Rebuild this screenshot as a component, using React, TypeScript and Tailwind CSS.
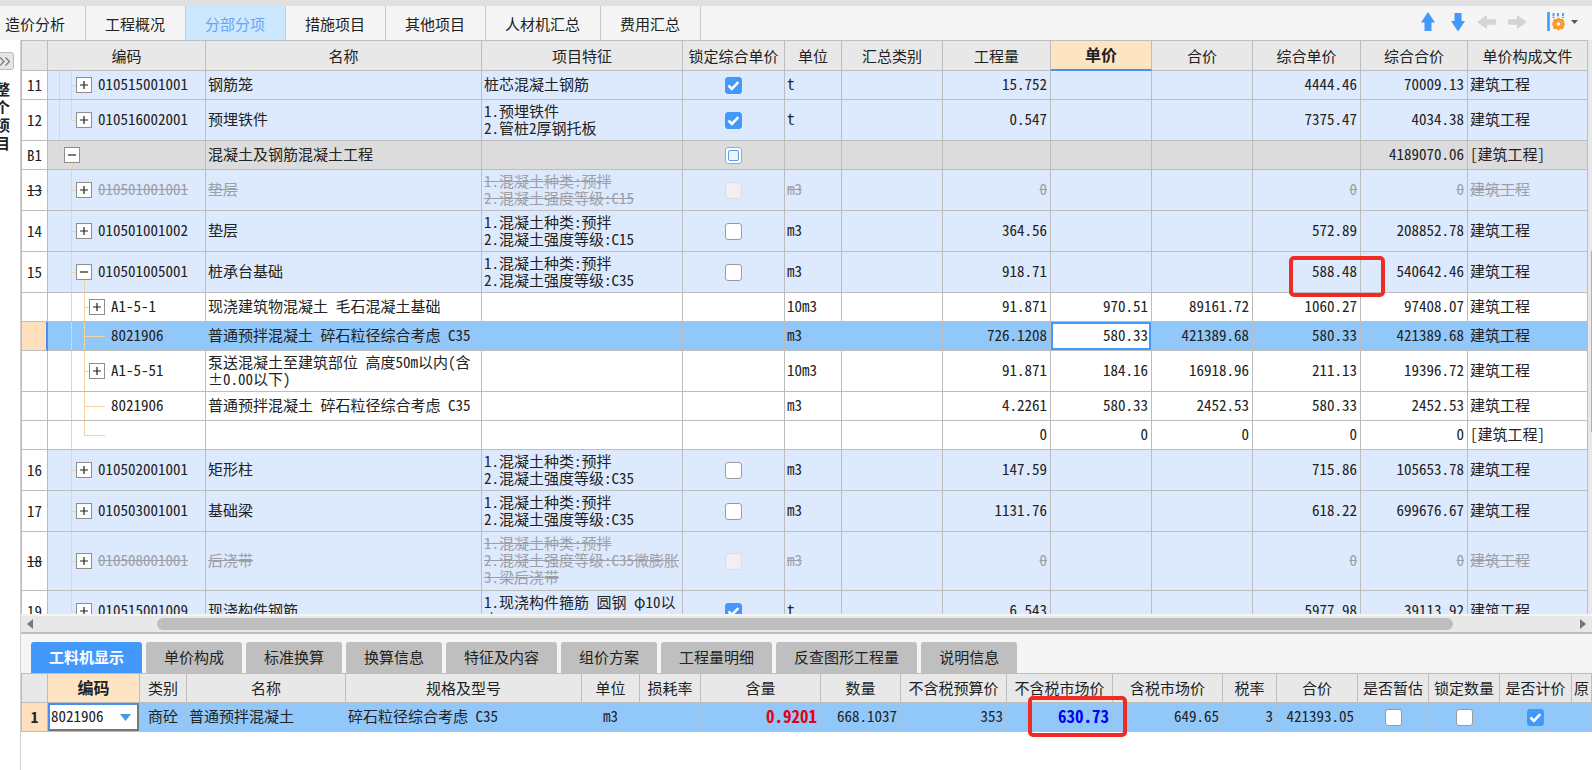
import React, { useState } from 'react';
import clsx from 'clsx';

type Guide = 'blank' | 'line' | 'tee' | 'end';
type Tone = 'item' | 'group' | 'sub' | 'selected';

interface Row {
  id: string;
  no: string;
  tone: Tone;
  lines: 1 | 2 | 3;
  guides: Guide[];
  toggle?: 'plus' | 'minus';
  code: string;
  name: string;
  feature?: string[];
  lock?: 'on' | 'off' | 'mixed' | 'disabled';
  unit: string;
  qty: string;
  price?: string;
  total?: string;
  compPrice: string;
  compTotal: string;
  file: string;
  struck?: boolean;
  marked?: boolean;
}

const mix = (grade: string) => ['1.混凝土种类:预拌', `2.混凝土强度等级:${grade}`];

const rows: Row[] = [
  { id: 'r11', no: '11', tone: 'item', lines: 1, guides: ['line', 'tee'], toggle: 'plus', code: '010515001001', name: '钢筋笼', feature: ['桩芯混凝土钢筋'], lock: 'on', unit: 't', qty: '15.752', compPrice: '4444.46', compTotal: '70009.13', file: '建筑工程' },
  { id: 'r12', no: '12', tone: 'item', lines: 2, guides: ['line', 'end'], toggle: 'plus', code: '010516002001', name: '预埋铁件', feature: ['1.预埋铁件', '2.管桩2厚钢托板'], lock: 'on', unit: 't', qty: '0.547', compPrice: '7375.47', compTotal: '4034.38', file: '建筑工程' },
  { id: 'b1', no: 'B1', tone: 'group', lines: 1, guides: ['end'], toggle: 'minus', code: '', name: '混凝土及钢筋混凝土工程', lock: 'mixed', unit: '', qty: '', compPrice: '', compTotal: '4189070.06', file: '[建筑工程]' },
  { id: 'r13', no: '13', tone: 'item', lines: 2, guides: ['blank', 'tee'], toggle: 'plus', code: '010501001001', name: '垫层', feature: mix('C15'), lock: 'disabled', unit: 'm3', qty: '0', compPrice: '0', compTotal: '0', file: '建筑工程', struck: true },
  { id: 'r14', no: '14', tone: 'item', lines: 2, guides: ['blank', 'tee'], toggle: 'plus', code: '010501001002', name: '垫层', feature: mix('C15'), lock: 'off', unit: 'm3', qty: '364.56', compPrice: '572.89', compTotal: '208852.78', file: '建筑工程' },
  { id: 'r15', no: '15', tone: 'item', lines: 2, guides: ['blank', 'tee'], toggle: 'minus', code: '010501005001', name: '桩承台基础', feature: mix('C35'), lock: 'off', unit: 'm3', qty: '918.71', compPrice: '588.48', compTotal: '540642.46', file: '建筑工程', marked: true },
  { id: 'r15a', no: '', tone: 'sub', lines: 1, guides: ['blank', 'line', 'tee'], toggle: 'plus', code: 'A1-5-1', name: '现浇建筑物混凝土 毛石混凝土基础', unit: '10m3', qty: '91.871', price: '970.51', total: '89161.72', compPrice: '1060.27', compTotal: '97408.07', file: '建筑工程' },
  { id: 'r15b', no: '', tone: 'selected', lines: 1, guides: ['blank', 'line', 'tee'], code: '8021906', name: '普通预拌混凝土 碎石粒径综合考虑 C35', unit: 'm3', qty: '726.1208', price: '580.33', total: '421389.68', compPrice: '580.33', compTotal: '421389.68', file: '建筑工程' },
  { id: 'r15c', no: '', tone: 'sub', lines: 2, guides: ['blank', 'line', 'tee'], toggle: 'plus', code: 'A1-5-51', name: '泵送混凝土至建筑部位 高度50m以内(含±0.00以下)', unit: '10m3', qty: '91.871', price: '184.16', total: '16918.96', compPrice: '211.13', compTotal: '19396.72', file: '建筑工程' },
  { id: 'r15d', no: '', tone: 'sub', lines: 1, guides: ['blank', 'line', 'tee'], code: '8021906', name: '普通预拌混凝土 碎石粒径综合考虑 C35', unit: 'm3', qty: '4.2261', price: '580.33', total: '2452.53', compPrice: '580.33', compTotal: '2452.53', file: '建筑工程' },
  { id: 'r15e', no: '', tone: 'sub', lines: 1, guides: ['blank', 'line', 'end'], code: '', name: '', unit: '', qty: '0', price: '0', total: '0', compPrice: '0', compTotal: '0', file: '[建筑工程]' },
  { id: 'r16', no: '16', tone: 'item', lines: 2, guides: ['blank', 'tee'], toggle: 'plus', code: '010502001001', name: '矩形柱', feature: mix('C35'), lock: 'off', unit: 'm3', qty: '147.59', compPrice: '715.86', compTotal: '105653.78', file: '建筑工程' },
  { id: 'r17', no: '17', tone: 'item', lines: 2, guides: ['blank', 'tee'], toggle: 'plus', code: '010503001001', name: '基础梁', feature: mix('C35'), lock: 'off', unit: 'm3', qty: '1131.76', compPrice: '618.22', compTotal: '699676.67', file: '建筑工程' },
  { id: 'r18', no: '18', tone: 'item', lines: 3, guides: ['blank', 'tee'], toggle: 'plus', code: '010508001001', name: '后浇带', feature: [...mix('C35微膨胀'), '3.梁后浇带'], lock: 'disabled', unit: 'm3', qty: '0', compPrice: '0', compTotal: '0', file: '建筑工程', struck: true },
  { id: 'r19', no: '19', tone: 'item', lines: 2, guides: ['blank', 'end'], toggle: 'plus', code: '010515001009', name: '现浇构件钢筋', feature: ['1.现浇构件箍筋 圆钢 φ10以', '内'], lock: 'on', unit: 't', qty: '6.543', compPrice: '5977.98', compTotal: '39113.92', file: '建筑工程' },
];

const columns = [
  { label: '编码', width: 'w-[158px]' },
  { label: '名称', width: '' },
  { label: '项目特征', width: 'w-[201px]' },
  { label: '锁定综合单价', width: 'w-[102px]' },
  { label: '单位', width: 'w-[57px]' },
  { label: '汇总类别', width: 'w-[101px]' },
  { label: '工程量', width: 'w-[108px]' },
  { label: '单价', width: 'w-[101px]', active: true },
  { label: '合价', width: 'w-[101px]' },
  { label: '综合单价', width: 'w-[108px]' },
  { label: '综合合价', width: 'w-[107px]' },
  { label: '单价构成文件', width: 'w-[120px]' },
];

const detailColumns = [
  { label: '编码', width: 'w-[92px]', active: true },
  { label: '类别', width: 'w-[47px]' },
  { label: '名称', width: 'w-[159px]' },
  { label: '规格及型号', width: '' },
  { label: '单位', width: 'w-[58px]' },
  { label: '损耗率', width: 'w-[61px]' },
  { label: '含量', width: 'w-[120px]' },
  { label: '数量', width: 'w-[80px]' },
  { label: '不含税预算价', width: 'w-[106px]' },
  { label: '不含税市场价', width: 'w-[106px]' },
  { label: '含税市场价', width: 'w-[110px]' },
  { label: '税率', width: 'w-[54px]' },
  { label: '合价', width: 'w-[81px]' },
  { label: '是否暂估', width: 'w-[71px]' },
  { label: '锁定数量', width: 'w-[71px]' },
  { label: '是否计价', width: 'w-[72px]' },
  { label: '原', width: 'w-[20px]' },
];

const mainTabs = ['造价分析', '工程概况', '分部分项', '措施项目', '其他项目', '人材机汇总', '费用汇总'];
const detailTabs = ['工料机显示', '单价构成', '标准换算', '换算信息', '特征及内容', '组价方案', '工程量明细', '反查图形工程量', '说明信息'];

const toneClass: Record<Tone, string> = {
  item: 'bg-[#dde9fd]',
  group: 'bg-[#dcdcdc]',
  sub: 'bg-white',
  selected: 'bg-[#91c8f9]',
};

const heightClass = { 1: 'h-[29px]', 2: 'h-[41px]', 3: 'h-[59px]' };
const innerHeightClass = { 1: 'h-[28px]', 2: 'h-[40px]', 3: 'h-[58px]' };

const cell = 'border-r border-b border-[#bdbdbd] leading-[17px]';

const TreeGuide = ({ kind, width }: { kind: Guide; width: string }) => (
  <span className={clsx('flex h-full flex-col', width)}>
    <span className={clsx('flex-1 border-[#f3d3a2]', kind !== 'blank' && 'border-l', (kind === 'tee' || kind === 'end') && 'border-b')} />
    <span className={clsx('flex-1 border-[#f3d3a2]', (kind === 'line' || kind === 'tee') && 'border-l')} />
  </span>
);

const Expander = ({ state }: { state: 'plus' | 'minus' }) => (
  <span className="flex h-full flex-col items-center">
    <span className="flex-1" />
    <button type="button" aria-label={state === 'plus' ? '展开' : '折叠'} className="flex size-4 items-center justify-center border border-[#8e8e8e] bg-white">
      <svg width="10" height="10" viewBox="0 0 10 10" stroke="#222" strokeWidth="1.2">
        <path d={state === 'plus' ? 'M1 5h8M5 1v8' : 'M1 5h8'} />
      </svg>
    </button>
    <span className={clsx('w-px flex-1', state === 'minus' && 'bg-[#f3d3a2]')} />
  </span>
);

const CodeCell = ({ row }: { row: Row }) => {
  const last = row.guides.length - 1;
  return (
    <div className={clsx('flex items-center pl-[11px]', innerHeightClass[row.lines])}>
      {row.guides.map((kind, i) => (
        <TreeGuide key={i} kind={kind} width={i < last ? (i === 1 ? 'w-[13px]' : 'w-[12px]') : row.toggle ? 'w-[5px]' : 'w-[21px]'} />
      ))}
      {row.toggle && <Expander state={row.toggle} />}
      <span className={clsx('pb-[3px] pl-1.5', row.struck && 'text-[#9c9fa6] line-through')}>{row.code}</span>
    </div>
  );
};

const Tick = ({ state, label }: { state: 'on' | 'off' | 'mixed' | 'disabled'; label: string }) => {
  const [checked, setChecked] = useState(state === 'on');
  return (
    <span className="mx-auto grid w-[17px] place-items-center">
      <input
        type="checkbox"
        aria-label={label}
        checked={checked}
        disabled={state === 'disabled'}
        onChange={(e) => setChecked(e.target.checked)}
        className={clsx(
          'col-start-1 row-start-1 size-[17px] appearance-none rounded-[3px] border',
          checked ? 'border-[#4398fb] bg-[#4398fb]' : state === 'disabled' ? 'border-[#dcdcdc] bg-[#f0f0f0]' : state === 'mixed' ? 'border-[#7fb0ee] bg-white' : 'border-[#9b9b9b] bg-white'
        )}
      />
      {checked && (
        <svg className="pointer-events-none col-start-1 row-start-1" width="13" height="13" viewBox="0 0 13 13" fill="none" stroke="#fff" strokeWidth="2.6">
          <path d="M1.5 6.5l3.4 3.4 6.4-6.8" />
        </svg>
      )}
      {state === 'mixed' && <span className="pointer-events-none col-start-1 row-start-1 size-[11px] rounded-[2px] border border-[#5b9bf0] bg-[#eef4fc]" />}
    </span>
  );
};

const BillTable = () => {
  const [price, setPrice] = useState('580.33');
  return (
    <table className="w-full table-fixed border-separate border-spacing-0 border-t border-l border-[#bdbdbd]">
      <colgroup>
        <col className="w-[26px]" />
        {columns.map((c) => <col key={c.label} className={c.width} />)}
      </colgroup>
      <thead>
        <tr className="h-[30px]">
          <th className={clsx(cell, 'bg-[#e8e8e8] p-0')} />
          {columns.map((c) => (
            <th
              key={c.label}
              className={clsx('overflow-hidden border-r p-0 leading-[17px] whitespace-nowrap', c.active ? 'border-b-2 border-r-[#bdbdbd] border-b-[#4a8fee] bg-[#ffe4c4] pb-0.5 text-base font-bold' : 'border-b border-[#bdbdbd] bg-[#e8e8e8] font-normal')}
            >
              {c.label}
            </th>
          ))}
        </tr>
      </thead>
      <tbody>
        {rows.map((row) => {
          const body = clsx(cell, 'p-0', toneClass[row.tone]);
          const label = clsx(cell, 'pt-0 pb-[3px]', toneClass[row.tone], row.struck && 'text-[#9c9fa6] line-through');
          const num = clsx(label, 'pr-[3px] pl-0 text-right');
          const text = clsx(label, 'pr-0 pl-[2px]');
          return (
            <tr key={row.id} className={heightClass[row.lines]}>
              <td className={clsx(cell, 'px-0 pt-0 pb-px text-center', row.tone === 'selected' ? 'border-r-2 border-r-[#4a8fee] bg-[#ffe0bd]' : 'bg-white', row.struck && 'line-through')}>{row.no}</td>
              <td className={body}><CodeCell row={row} /></td>
              <td className={text}>{row.name}</td>
              <td className={clsx(text, 'overflow-hidden whitespace-nowrap')}>
                {row.feature?.map((line) => <div key={line}>{line}</div>)}
              </td>
              <td className={body}>{row.lock && <Tick state={row.lock} label={`${row.name} 锁定综合单价`} />}</td>
              <td className={text}>{row.unit}</td>
              <td className={body} />
              <td className={num}>{row.qty}</td>
              {row.tone === 'selected' ? (
                <td className={body}>
                  <input
                    aria-label="单价"
                    value={price}
                    onChange={(e) => setPrice(e.target.value)}
                    className="block h-[28px] w-full border-2 border-[#4398fb] bg-white pr-px pb-[3px] text-right outline-none"
                  />
                </td>
              ) : (
                <td className={num}>{row.price}</td>
              )}
              <td className={num}>{row.total}</td>
              <td className={clsx(num, row.marked && 'relative')}>
                {row.compPrice}
                {row.marked && <span className="pointer-events-none absolute top-1 left-9 z-10 h-[41px] w-24 rounded-[5px] border-4 border-[#f02a24]" />}
              </td>
              <td className={num}>{row.compTotal}</td>
              <td className={text}>{row.file}</td>
            </tr>
          );
        })}
      </tbody>
    </table>
  );
};

const DetailTable = () => {
  const base = 'border-r border-b border-r-[#a4c3de] border-b-[#bdbdbd] bg-[#91c8f9] leading-[17px] whitespace-nowrap';
  const body = clsx(base, 'p-0');
  const num = clsx(base, 'pt-0 pr-[3px] pb-[3px] pl-0 text-right');
  const text = clsx(base, 'pt-0 pr-0 pb-[3px] pl-[2px]');
  const center = clsx(base, 'px-0 pt-0 pb-[3px] text-center');
  return (
    <table className="w-full table-fixed border-separate border-spacing-0 border-t border-l border-[#bdbdbd]">
      <colgroup>
        <col className="w-[26px]" />
        {detailColumns.map((c) => <col key={c.label} className={c.width} />)}
      </colgroup>
      <thead>
        <tr className="h-[29px]">
          <th className={clsx(cell, 'bg-[#e8e8e8] p-0')} />
          {detailColumns.map((c) => (
            <th key={c.label} className={clsx(cell, 'overflow-hidden px-0 pt-0 pb-0.5 whitespace-nowrap', c.active ? 'bg-[#ffe4c4] text-base font-bold' : 'bg-[#e8e8e8] font-normal')}>
              {c.label}
            </th>
          ))}
        </tr>
      </thead>
      <tbody>
        <tr className="h-[29px]">
          <th className={clsx(cell, 'bg-[#ffe0bd] px-0 pt-0 pb-px font-bold')}>1</th>
          <td className={body}>
            <div className="grid items-center">
              <select aria-label="编码" className="col-start-1 row-start-1 h-[28px] w-full appearance-none border-2 border-[#4a8fee] border-r-[#777] border-b-[#777] bg-white pb-[3px] pl-px outline-none">
                <option>8021906</option>
              </select>
              <svg className="pointer-events-none col-start-1 row-start-1 mr-2 justify-self-end" width="11" height="7" viewBox="0 0 11 7" fill="#4a97d6">
                <path d="M0 0h11L5.500 7z" />
              </svg>
            </div>
          </td>
          <td className={center}>商砼</td>
          <td className={text}>普通预拌混凝土</td>
          <td className={text}>碎石粒径综合考虑 C35</td>
          <td className={center}>m3</td>
          <td className={body} />
          <td className={clsx(num, 'text-[17px] font-bold text-[#e60012]')}>0.9201</td>
          <td className={num}>668.1037</td>
          <td className={num}>353</td>
          <td className={clsx(num, 'relative text-[17px] font-bold text-[#0000f5]')}>
            630.73
            <span className="pointer-events-none absolute -top-[7px] left-[21px] z-10 h-[41px] w-[99px] rounded-[5px] border-4 border-[#f02a24]" />
          </td>
          <td className={num}>649.65</td>
          <td className={num}>3</td>
          <td className={num}>421393.05</td>
          <td className={body}><Tick state="off" label="是否暂估" /></td>
          <td className={body}><Tick state="off" label="锁定数量" /></td>
          <td className={body}><Tick state="on" label="是否计价" /></td>
          <td className={body} />
        </tr>
      </tbody>
    </table>
  );
};

const Toolbar = () => (
  <div className="ml-auto flex items-center pr-3.5 pb-0.5">
    <button type="button" aria-label="上移" className="mr-4">
      <svg width="14" height="20" viewBox="0 0 14 20" fill="#4398fb"><path d="M7 0l7 10.500h-3.500V19h-7v-8.500H0z" /></svg>
    </button>
    <button type="button" aria-label="下移" className="mr-3">
      <svg width="14" height="20" viewBox="0 0 14 20" fill="#4398fb"><path d="M7 19.500l7-10.500h-3.500V1h-7v8H0z" /></svg>
    </button>
    <button type="button" aria-label="升级" className="mr-3">
      <svg width="19" height="14" viewBox="0 0 19 14" fill="#d4d4d4"><path d="M0 7l10-7v4.300h9v5.400h-9V14z" /></svg>
    </button>
    <button type="button" aria-label="降级" className="mr-5">
      <svg width="19" height="14" viewBox="0 0 19 14" fill="#d4d4d4"><path d="M19 7L9 0v4.300H0v5.400h9V14z" /></svg>
    </button>
    <button type="button" aria-label="列设置" className="flex items-center gap-1.5">
      <svg width="18" height="20" viewBox="0 0 18 20" fill="none">
        <path d="M1.500 0v19" stroke="#4398fb" strokeWidth="2.600" />
        <path d="M6.500 1v5M11 1v4M16 1v5" stroke="#4398fb" strokeWidth="1.800" strokeDasharray="3 .8" />
        <path d="M11.500 5.400l2.100 1.700 2.700-.1.700 2.500 1 2.500-1 2.500-.7 2.500-2.700-.1-2.100 1.700-2.100-1.700-2.700.1-.7-2.500-1-2.500 1-2.500.7-2.500 2.700.1z" fill="#ff9a2a" />
        <circle cx="11.500" cy="12" r="1.800" fill="#fff" />
      </svg>
      <svg width="7" height="4" viewBox="0 0 7 4" fill="#555"><path d="M0 0h7L3.500 4z" /></svg>
    </button>
  </div>
);

const App: React.FC = () => {
  const [tab, setTab] = useState('分部分项');
  const [detailTab, setDetailTab] = useState('工料机显示');

  return (
    <div className="flex h-screen flex-col overflow-hidden bg-white font-['Noto_Sans_Mono_CJK_SC','Noto_Sans_CJK_SC',monospace] text-[15px] text-[#222]">
      <div className="h-1.5 shrink-0 bg-[#e0e0e0]" />
      <nav className="flex h-[34px] shrink-0 bg-[#f5f5f5]">
        {mainTabs.map((name, i) => (
          <button
            key={name}
            type="button"
            onClick={() => setTab(name)}
            className={clsx('border-r border-[#c9c9c9] pr-5 leading-[17px] whitespace-nowrap', i === 0 ? 'pl-[5px]' : 'pl-[19px]', tab === name && 'bg-[#cbe8ff] text-[#67a3f8]')}
          >
            {name}
          </button>
        ))}
        <Toolbar />
      </nav>

      <div className="flex min-h-0 flex-1">
        <aside className="w-[21px] shrink-0 overflow-hidden border-r border-[#d0d0d0] pt-3">
          <button type="button" aria-label="展开侧栏" className="-ml-1 flex h-[18px] w-[18px] items-center justify-center rounded-[3px] border border-[#bbb] bg-[#e6e6e6]">
            <svg width="12" height="9" viewBox="0 0 12 9" fill="none" stroke="#777" strokeWidth="1.200"><path d="M1 .5l4 4-4 4M6.500 .5l4 4-4 4" /></svg>
          </button>
          <div className="mt-2.5 -ml-[5px] w-4 leading-[18px] font-bold break-all">整个项目</div>
        </aside>

        <main className="flex min-w-0 flex-1 flex-col">
          <div className="flex min-h-0 flex-1 overflow-hidden">
            <div className="min-w-0 flex-1 overflow-hidden"><BillTable /></div>
            <div className="flex w-1 shrink-0 justify-end bg-[#e8e8e8] pt-[211px]">
              <div className="h-[181px] w-px bg-[#b0b0b0]" />
            </div>
          </div>

          <div className="flex h-5 shrink-0 items-center border-t-2 border-b-2 border-t-[#f5f5f5] border-b-[#bdbdbd] bg-[#e8e8e8] px-1.5">
            <svg width="6" height="10" viewBox="0 0 6 10" fill="#777"><path d="M6 0v10L0 5z" /></svg>
            <div className="mr-[127px] ml-[124px] h-3 flex-1 rounded-full bg-[#bebebe]" />
            <svg width="6" height="10" viewBox="0 0 6 10" fill="#777"><path d="M0 0v10l6-5z" /></svg>
          </div>

          <div className="flex h-[39px] shrink-0 items-end gap-1 bg-[#f5f5f5] pl-2.5">
            {detailTabs.map((name) => (
              <button
                key={name}
                type="button"
                onClick={() => setDetailTab(name)}
                className={clsx('h-[31px] rounded-t-[3px] px-[18px] pb-0.5 leading-[17px] whitespace-nowrap', detailTab === name ? 'bg-[#4398fb] font-bold text-white' : 'bg-[#bfbfbf]')}
              >
                {name}
              </button>
            ))}
          </div>
          <div className="h-[97px] shrink-0 overflow-hidden"><DetailTable /></div>
        </main>
      </div>
    </div>
  );
};

export default App;
